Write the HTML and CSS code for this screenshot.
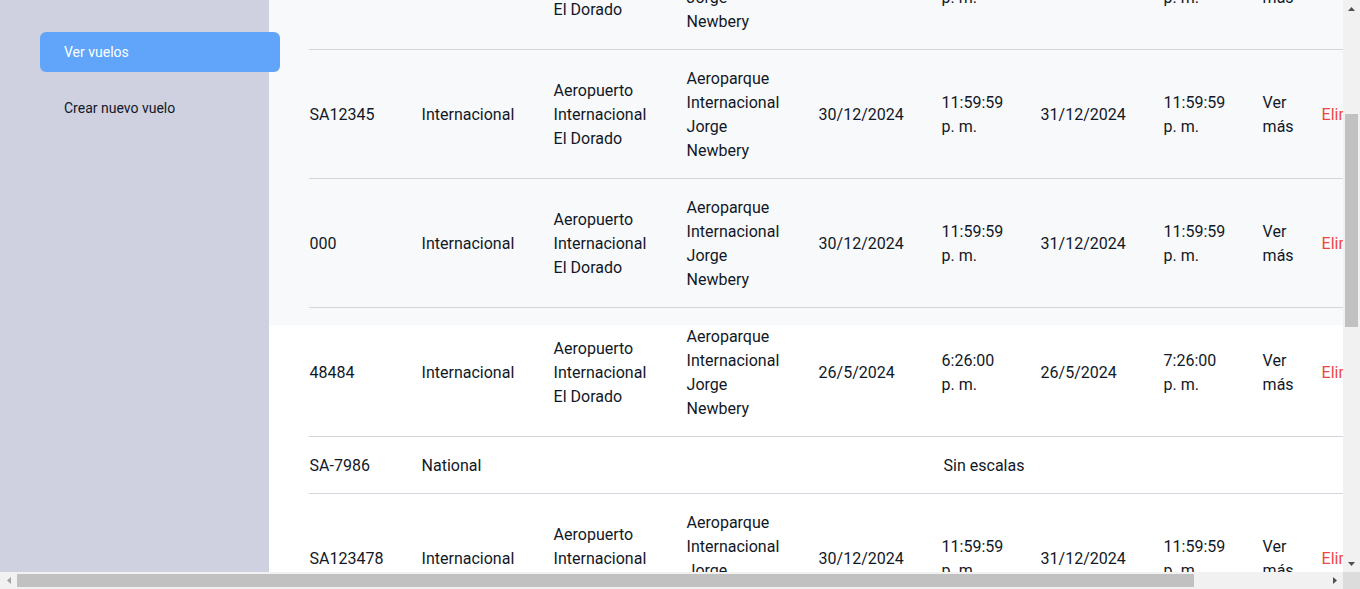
FILE: index.html
```html
<!DOCTYPE html>
<html lang="es">
<head>
<meta charset="utf-8">
<title>Vuelos</title>
<link rel="stylesheet" href="styles.css">
</head>
<body>
<div class="frame">
  <div class="viewport" id="viewport">
    <div class="layout">
      <aside class="sidebar">
        <nav class="nav">
          <a class="nav-item active" href="#">Ver vuelos</a>
          <a class="nav-item" href="#">Crear nuevo vuelo</a>
        </nav>
      </aside>
      <main class="main">
        <div class="content">
          <h1 class="title">Vuelos</h1>
          <table class="flights">
            <colgroup>
              <col class="c1"><col class="c2"><col class="c3"><col class="c4"><col class="c5">
              <col class="c6"><col class="c7"><col class="c8"><col class="c9"><col class="c10">
            </colgroup>
            <thead>
              <tr>
                <th>Código de vuelo</th><th>Tipo</th><th>Origen</th><th>Destino</th><th>Fecha de salida</th>
                <th>Hora de salida</th><th>Fecha de llegada</th><th>Hora de llegada</th><th></th><th></th>
              </tr>
            </thead>
            <tbody>
              <tr>
                <td>AR1302</td><td>Internacional</td><td>Aeropuerto Internacional El Dorado</td><td>Aeroparque Internacional Jorge Newbery</td>
                <td>30/12/2024</td><td>11:59:59 p. m.</td><td>31/12/2024</td><td>11:59:59 p. m.</td>
                <td><a class="more" href="#">Ver más</a></td><td><span class="delete">Eliminar</span></td>
              </tr>
              <tr>
                <td>SA12345</td><td>Internacional</td><td>Aeropuerto Internacional El Dorado</td><td>Aeroparque Internacional Jorge Newbery</td>
                <td>30/12/2024</td><td>11:59:59 p. m.</td><td>31/12/2024</td><td>11:59:59 p. m.</td>
                <td><a class="more" href="#">Ver más</a></td><td><span class="delete">Eliminar</span></td>
              </tr>
              <tr>
                <td>000</td><td>Internacional</td><td>Aeropuerto Internacional El Dorado</td><td>Aeroparque Internacional Jorge Newbery</td>
                <td>30/12/2024</td><td>11:59:59 p. m.</td><td>31/12/2024</td><td>11:59:59 p. m.</td>
                <td><a class="more" href="#">Ver más</a></td><td><span class="delete">Eliminar</span></td>
              </tr>
              <tr>
                <td>48484</td><td>Internacional</td><td>Aeropuerto Internacional El Dorado</td><td>Aeroparque Internacional Jorge Newbery</td>
                <td>26/5/2024</td><td>6:26:00 p. m.</td><td>26/5/2024</td><td>7:26:00 p. m.</td>
                <td><a class="more" href="#">Ver más</a></td><td><span class="delete">Eliminar</span></td>
              </tr>
              <tr>
                <td>SA-7986</td><td>National</td><td></td><td></td><td></td>
                <td class="nostop">Sin escalas</td><td></td><td></td><td></td><td></td>
              </tr>
              <tr>
                <td>SA123478</td><td>Internacional</td><td>Aeropuerto Internacional El Dorado</td><td>Aeroparque Internacional Jorge Newbery</td>
                <td>30/12/2024</td><td>11:59:59 p. m.</td><td>31/12/2024</td><td>11:59:59 p. m.</td>
                <td><a class="more" href="#">Ver más</a></td><td><span class="delete">Eliminar</span></td>
              </tr>
              <tr>
                <td>SA55201</td><td>Internacional</td><td>Aeropuerto Internacional El Dorado</td><td>Aeroparque Internacional Jorge Newbery</td>
                <td>2/1/2025</td><td>8:15:00 a. m.</td><td>2/1/2025</td><td>2:40:00 p. m.</td>
                <td><a class="more" href="#">Ver más</a></td><td><span class="delete">Eliminar</span></td>
              </tr>
              <tr>
                <td>SA77812</td><td>Internacional</td><td>Aeropuerto Internacional El Dorado</td><td>Aeroparque Internacional Jorge Newbery</td>
                <td>5/1/2025</td><td>9:30:00 a. m.</td><td>5/1/2025</td><td>3:55:00 p. m.</td>
                <td><a class="more" href="#">Ver más</a></td><td><span class="delete">Eliminar</span></td>
              </tr>
              <tr>
                <td>SA90034</td><td>Internacional</td><td>Aeropuerto Internacional El Dorado</td><td>Aeroparque Internacional Jorge Newbery</td>
                <td>10/1/2025</td><td>6:00:00 a. m.</td><td>10/1/2025</td><td>12:25:00 p. m.</td>
                <td><a class="more" href="#">Ver más</a></td><td><span class="delete">Eliminar</span></td>
              </tr>
              <tr>
                <td>SA10457</td><td>Internacional</td><td>Aeropuerto Internacional El Dorado</td><td>Aeroparque Internacional Jorge Newbery</td>
                <td>15/1/2025</td><td>10:45:00 p. m.</td><td>16/1/2025</td><td>5:10:00 a. m.</td>
                <td><a class="more" href="#">Ver más</a></td><td><span class="delete">Eliminar</span></td>
              </tr>
            </tbody>
          </table>
        </div>
      </main>
    </div>
  </div>

  <div class="vbar">
    <div class="sb-btn"><svg width="7" height="4" viewBox="0 0 7 4"><path d="M0 4L3.5 0L7 4z" fill="#505050"/></svg></div>
    <div class="vtrack"><div class="vthumb"></div></div>
    <div class="sb-btn"><svg width="7" height="4" viewBox="0 0 7 4"><path d="M0 0L3.5 4L7 0z" fill="#505050"/></svg></div>
  </div>
  <div class="hbar">
    <div class="sb-btn"><svg width="4" height="7" viewBox="0 0 4 7"><path d="M4 0L0 3.5L4 7z" fill="#a3a3a3"/></svg></div>
    <div class="htrack"><div class="hthumb"></div></div>
    <div class="sb-btn"><svg width="4" height="7" viewBox="0 0 4 7"><path d="M0 0L4 3.5L0 7z" fill="#505050"/></svg></div>
  </div>
  <div class="corner"></div>
</div>
<script src="script.js"></script>
</body>
</html>
```

FILE: styles.css
```css
html, body {
  margin: 0;
  padding: 0;
  overflow: hidden;
}

body {
  font-family: Roboto, "Liberation Sans", sans-serif;
  color: #111827;
  background: #ffffff;
}

.frame {
  display: grid;
  grid-template-columns: minmax(0, 1fr) 17px;
  grid-template-rows: minmax(0, 1fr) 17px;
  width: 100vw;
  height: 100vh;
}

.viewport {
  overflow: auto;
  scrollbar-width: none;
  background: #ffffff;
}

.viewport::-webkit-scrollbar {
  display: none;
}

.layout {
  display: flex;
  align-items: flex-start;
}

.sidebar {
  flex: 0 0 20%;
  min-width: 0;
  position: sticky;
  top: 0;
  height: calc(100vh - 17px);
  box-sizing: border-box;
  padding: 32px 0 0 40px;
  background: #cfd1e0;
  z-index: 1;
}

.nav {
  display: flex;
  flex-direction: column;
  gap: 16px;
  width: 240px;
}

.nav-item {
  display: flex;
  align-items: center;
  height: 40px;
  padding-left: 24px;
  border-radius: 6px;
  font-size: 14px;
  color: #111827;
  text-decoration: none;
}

.nav-item.active {
  background: #60a5fa;
  color: #ffffff;
}

.main {
  flex: 1 1 auto;
  min-width: 0;
  background: linear-gradient(#f8f9fb, #f8f9fb) 0 0 / 100% 100vh no-repeat;
}

.content {
  width: max-content;
  padding: 40px;
}

.title {
  margin: 0 0 32px;
  font-size: 24px;
  line-height: 32px;
  font-weight: 600;
}

.flights {
  border-collapse: separate;
  border-spacing: 0;
  table-layout: fixed;
  width: 1145px;
  font-size: 16px;
  line-height: 24px;
}

.c1 { width: 112px; }
.c2 { width: 132px; }
.c3 { width: 133px; }
.c4 { width: 132px; }
.c5 { width: 123px; }
.c6 { width: 99px; }
.c7 { width: 123px; }
.c8 { width: 99px; }
.c9 { width: 59px; }
.c10 { width: 133px; }

.flights th,
.flights td {
  padding: 17px 29px 15px 1px;
  text-align: left;
  vertical-align: middle;
  border-bottom: 1px solid #d4d5dd;
}

.flights td:nth-child(9) {
  padding-right: 19px;
}

.flights th {
  font-weight: 600;
}

.flights .nostop {
  padding-left: 3px;
  white-space: nowrap;
}

.more {
  color: #111827;
  text-decoration: none;
}

.delete {
  color: #ef4444;
}

/* window scrollbars */
.vbar {
  display: flex;
  flex-direction: column;
  background: #f1f1f1;
}

.hbar {
  display: flex;
  background: #f1f1f1;
}

.sb-btn {
  flex: 0 0 17px;
  width: 17px;
  height: 17px;
  display: flex;
  align-items: center;
  justify-content: center;
}

.vtrack {
  flex: 1;
  padding: 0 2px;
}

.vthumb {
  margin-top: 97px;
  height: 213px;
  background: #c1c1c1;
}

.htrack {
  flex: 1;
  padding: 2px 0;
}

.hthumb {
  width: 1177px;
  height: 13px;
  background: #c1c1c1;
}

.corner {
  background: #dcdcdc;
}
```

FILE: script.js
```js
(function () {
  var view = document.getElementById('viewport');
  function place() {
    view.scrollTop = 264;
    view.scrollLeft = 0;
  }
  place();
  window.addEventListener('load', place);
})();
```
